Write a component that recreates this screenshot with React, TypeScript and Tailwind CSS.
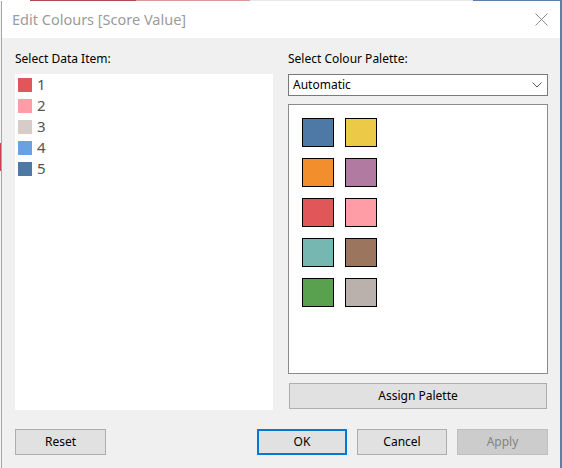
import React from "react";

const font = { fontFamily: '"Segoe UI", "Noto Sans", "Liberation Sans", sans-serif' };

const items = [
  { n: "1", c: "bg-[#e15759]" },
  { n: "2", c: "bg-[#ff9da7]" },
  { n: "3", c: "bg-[#d7ccc8]" },
  { n: "4", c: "bg-[#69a2e0]" },
  { n: "5", c: "bg-[#4e79a7]" },
];

const palette = [
  "bg-[#4e79a7]",
  "bg-[#edc948]",
  "bg-[#f28e2b]",
  "bg-[#b07aa1]",
  "bg-[#e15759]",
  "bg-[#ff9da7]",
  "bg-[#76b7b2]",
  "bg-[#9c755f]",
  "bg-[#59a14f]",
  "bg-[#bab0ac]",
];

export default function App() {
  return (
    <div className="w-[562px] h-[468px] flex flex-col bg-white overflow-hidden" style={font}>
      {/* top background strip */}
      <div className="h-[1px] flex shrink-0">
        <div className="w-[30px] bg-white" />
        <div className="w-[106px] bg-[#b04a4d]" />
        <div className="w-[114px] bg-[#d49a9c]" />
        <div className="w-[223px] bg-[#e8e8e8]" />
        <div className="flex-1 bg-[#5b7fa6]" />
      </div>
      <div className="flex-1 flex min-h-0">
        {/* left background strip */}
        <div className="w-[1px] flex flex-col bg-[#f4f4f4]">
          <div className="h-[142px]" />
          <div className="h-[28px] bg-[#c9464b]" />
          <div className="flex-1" />
        </div>
        {/* dialog */}
        <div className="flex-1 flex flex-col border-l border-[#a6a6a6] bg-[#f0f0f0]">
          <div className="h-[37px] shrink-0 bg-white flex items-center justify-between pl-[10px] pr-[12px]">
            <span className="text-[14.5px] text-[#9b9b9b] leading-none">Edit Colours [Score Value]</span>
            <svg width="13" height="13" viewBox="0 0 13 13">
              <path d="M0.5 0.5 L12.5 12.5 M12.5 0.5 L0.5 12.5" stroke="#8a8a8a" strokeWidth="1" fill="none" />
            </svg>
          </div>
          <div className="flex-1 flex flex-col pl-[13px] pr-[12px] pt-[13px]">
            <div className="flex gap-[15px]">
              {/* left column */}
              <div className="w-[258px] flex flex-col">
                <div className="text-[12px] leading-[16px] text-black h-[23px]">Select Data Item:</div>
                <div className="h-[336px] bg-white pl-[3px] flex flex-col">
                  {items.map((it) => (
                    <div key={it.n} className="h-[21px] flex items-center gap-[5px]">
                      <div className={`w-[14px] h-[14px] ${it.c}`} />
                      <span className="text-[15px] leading-none text-[#555555]">{it.n}</span>
                    </div>
                  ))}
                </div>
              </div>
              {/* right column */}
              <div className="w-[260px] flex flex-col">
                <div className="text-[12px] leading-[16px] text-black h-[23px]">Select Colour Palette:</div>
                <div className="h-[22px] bg-white border border-[#7a7a7a] flex items-center justify-between pl-[4px] pr-[5px]">
                  <span className="text-[12px] leading-none text-black">Automatic</span>
                  <svg width="10" height="6" viewBox="0 0 10 6">
                    <path d="M0.5 0.5 L5 5 L9.5 0.5" stroke="#555" strokeWidth="1" fill="none" />
                  </svg>
                </div>
                <div className="mt-[8px] h-[270px] bg-white border border-[#8a8a8f] pl-[13px] pt-[13px]">
                  <div className="grid grid-cols-[32px_32px] gap-[11px]">
                    {palette.map((c, i) => (
                      <div key={i} className={`w-[32px] h-[29px] border border-black ${c}`} />
                    ))}
                  </div>
                </div>
                <div className="mt-[9px] mx-[1px] h-[26px] bg-[#e1e1e1] border border-[#adadad] flex items-center justify-center text-[12px] text-black">
                  Assign Palette
                </div>
              </div>
            </div>
            <div className="mt-[19px] flex items-center">
              <div className="w-[91px] h-[26px] bg-[#e1e1e1] border border-[#adadad] flex items-center justify-center text-[12px] text-black">
                Reset
              </div>
              <div className="flex-1" />
              <div className="flex gap-[10px]">
                <div className="w-[90px] h-[26px] bg-[#e1e1e1] border-2 border-[#0078d7] flex items-center justify-center text-[12px] text-black">
                  OK
                </div>
                <div className="w-[90px] h-[26px] bg-[#e1e1e1] border border-[#adadad] flex items-center justify-center text-[12px] text-black">
                  Cancel
                </div>
                <div className="w-[91px] h-[26px] bg-[#cccccc] border border-[#bfbfbf] flex items-center justify-center text-[12px] text-[#838383]">
                  Apply
                </div>
              </div>
            </div>
          </div>
        </div>
        {/* right background strip */}
        <div className="w-[2px] bg-[#5b7fa6]" />
      </div>
    </div>
  );
}
